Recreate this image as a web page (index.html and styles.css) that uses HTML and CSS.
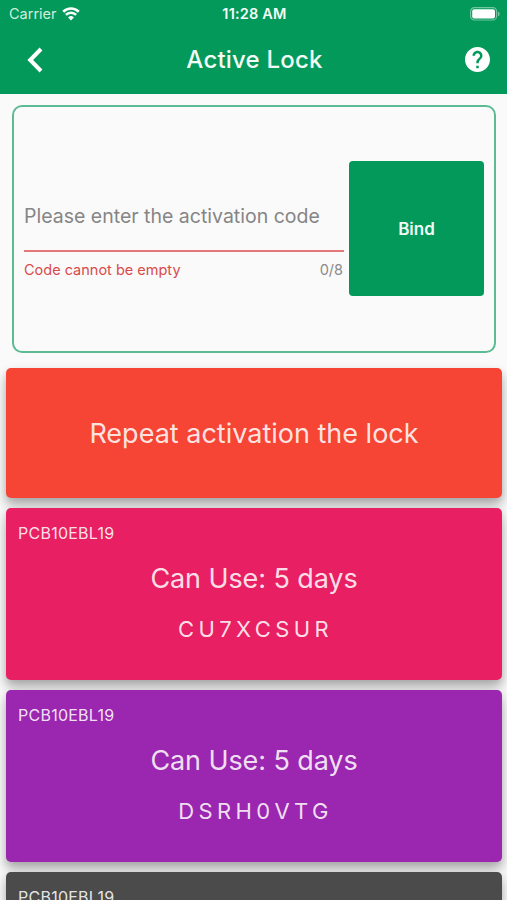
FILE: index.html
```html
<!doctype html>
<html>
<head>
<meta charset="UTF-8">
<title>Active Lock</title>
<meta name="viewport" content="width=device-width, initial-scale=1.0">
<link rel="stylesheet" href="styles.css">
</head>
<body>
<header class="header">
  <div class="statusbar">
    <div class="carrier">
      <span>Carrier</span>
      <svg class="wifi" viewBox="0 0 18 14">
        <path d="M1.2 4.7a11.2 11.2 0 0 1 15.6 0M3.9 7.8a7.2 7.2 0 0 1 10.2 0"/>
        <path class="dot" d="M9 13.4 6.1 10.5a4.1 4.1 0 0 1 5.8 0z"/>
      </svg>
    </div>
    <div class="time">11:28 AM</div>
    <svg class="battery" viewBox="0 0 30 14">
      <rect class="shell" x=".6" y=".6" width="26" height="12.4" rx="3.8"/>
      <rect x="2.2" y="2.2" width="22.8" height="9.2" rx="2"/>
      <path class="cap" d="M28 4.6a2.4 2.4 0 0 1 0 4.6z"/>
    </svg>
  </div>
  <nav class="navbar">
    <svg class="back" viewBox="0 0 16 26"><path d="M14 2 3.2 13 14 24"/></svg>
    <h1 class="title">Active Lock</h1>
    <svg class="help" viewBox="2 2 20 20">
      <path d="M12 2C6.48 2 2 6.48 2 12s4.48 10 10 10 10-4.48 10-10S17.52 2 12 2zm1 17h-2v-2h2v2zm2.07-7.75l-.9.92C13.45 12.9 13 13.5 13 15h-2v-.5c0-1.1.45-2.1 1.17-2.83l1.24-1.26c.37-.36.59-.86.59-1.41 0-1.1-.9-2-2-2s-2 .9-2 2H8c0-2.21 1.79-4 4-4s4 1.79 4 4c0 .88-.36 1.68-.93 2.25z"/>
    </svg>
  </nav>
</header>

<section class="bind">
  <div class="field">
    <div class="placeholder"><span>Please enter the activation code</span></div>
    <div class="helper">
      <span class="error">Code cannot be empty</span>
      <span class="counter">0/8</span>
    </div>
  </div>
  <button class="bind-btn">Bind</button>
</section>

<main class="cards">
  <div class="card repeat"><span>Repeat activation the lock</span></div>
  <div class="card pink">
    <div class="model">PCB10EBL19</div>
    <div class="days">Can Use: 5 days</div>
    <div class="code">CU7XCSUR</div>
  </div>
  <div class="card purple">
    <div class="model">PCB10EBL19</div>
    <div class="days">Can Use: 5 days</div>
    <div class="code">DSRH0VTG</div>
  </div>
  <div class="card dark">
    <div class="model">PCB10EBL19</div>
  </div>
</main>
</body>
</html>
```
FILE: styles.css
```css
* { box-sizing: border-box; }
body { margin: 0; height: 900px; display: flex; flex-direction: column; overflow: hidden; background: #fafafa; font-family: Inter, "Liberation Sans", sans-serif; }
.header { flex: none; height: 94px; background: #02995a; color: #f2fbf6; }
.statusbar { display: grid; grid-template-columns: 1fr auto 1fr; align-items: center; height: 27px; padding: 0 7px 0 9px; }
.carrier { display: flex; align-items: center; gap: 5px; font-size: 14.5px; color: #cfeede; }
.wifi { width: 18px; height: 14px; fill: none; stroke: #fff; stroke-width: 2.6; }
.wifi .dot { fill: #fff; stroke: none; }
.time { font-size: 14.5px; font-weight: 600; letter-spacing: 0.2px; }
.battery { justify-self: end; width: 30px; height: 14px; fill: #fff; }
.battery .shell { fill: none; stroke: #74c5a0; stroke-width: 1.2; }
.battery .cap { fill: #74c5a0; }
.navbar { display: grid; grid-template-columns: 81px 1fr 79px; align-items: center; height: 65px; }
.back { width: 16px; height: 26px; margin-left: 27px; fill: none; stroke: #fff; stroke-width: 4; }
.title { margin: 0; font-size: 24px; font-weight: 500; letter-spacing: 0.2px; text-align: center; }
.help { justify-self: end; width: 25px; height: 25px; margin-right: 17px; fill: #fff; }

.bind { flex: none; display: flex; align-items: center; gap: 5px; height: 248px; margin: 10.5px 11px 0 12px; padding: 0 10px; border: 2px solid #5cbb93; border-radius: 10px; }
.field { flex: 1; padding-top: 2px; }
.placeholder { height: 71px; padding-top: 23px; border-bottom: 2px solid #e57878; font-size: 19.5px; line-height: 24px; color: #858585; white-space: nowrap; }
.helper { display: flex; justify-content: space-between; padding: 9px 1px 0 0; font-size: 14.5px; line-height: 18px; }
.error { color: #d94a4a; }
.counter { color: #8a8a8a; }
.bind-btn { width: 135px; height: 135px; padding: 0; border: 0; border-radius: 4px; background: #02995a; color: #f2fbf6; font: 600 17px Inter, sans-serif; }

.cards { flex: 1; min-height: 0; display: flex; flex-direction: column; gap: 10px; margin-top: 15.5px; padding: 0 5px 0 6px; }
.card { flex: none; height: 172.3px; padding: 15px 12px; border-radius: 5px; box-shadow: 0 5px 9px rgba(0, 0, 0, 0.22), 0 9px 16px rgba(0, 0, 0, 0.16); color: rgba(255, 255, 255, 0.87); text-align: center; }
.repeat { display: flex; align-items: center; justify-content: center; height: 129.5px; padding-top: 17px; background: #f64435; font-size: 27px; }
.pink { background: #e91f63; }
.purple { background: #9b27b0; }
.dark { flex: 1; min-height: 0; padding-bottom: 0; border-radius: 5px 5px 0 0; background: #4b4b4b; }
.model { font-size: 16px; line-height: 20px; letter-spacing: 0.25px; text-align: left; }
.days { margin-top: 18px; font-size: 27px; line-height: 36px; letter-spacing: -0.1px; }
.code { margin-top: 17px; padding-left: 3px; font-size: 22px; line-height: 30px; letter-spacing: 4.4px; }
```
